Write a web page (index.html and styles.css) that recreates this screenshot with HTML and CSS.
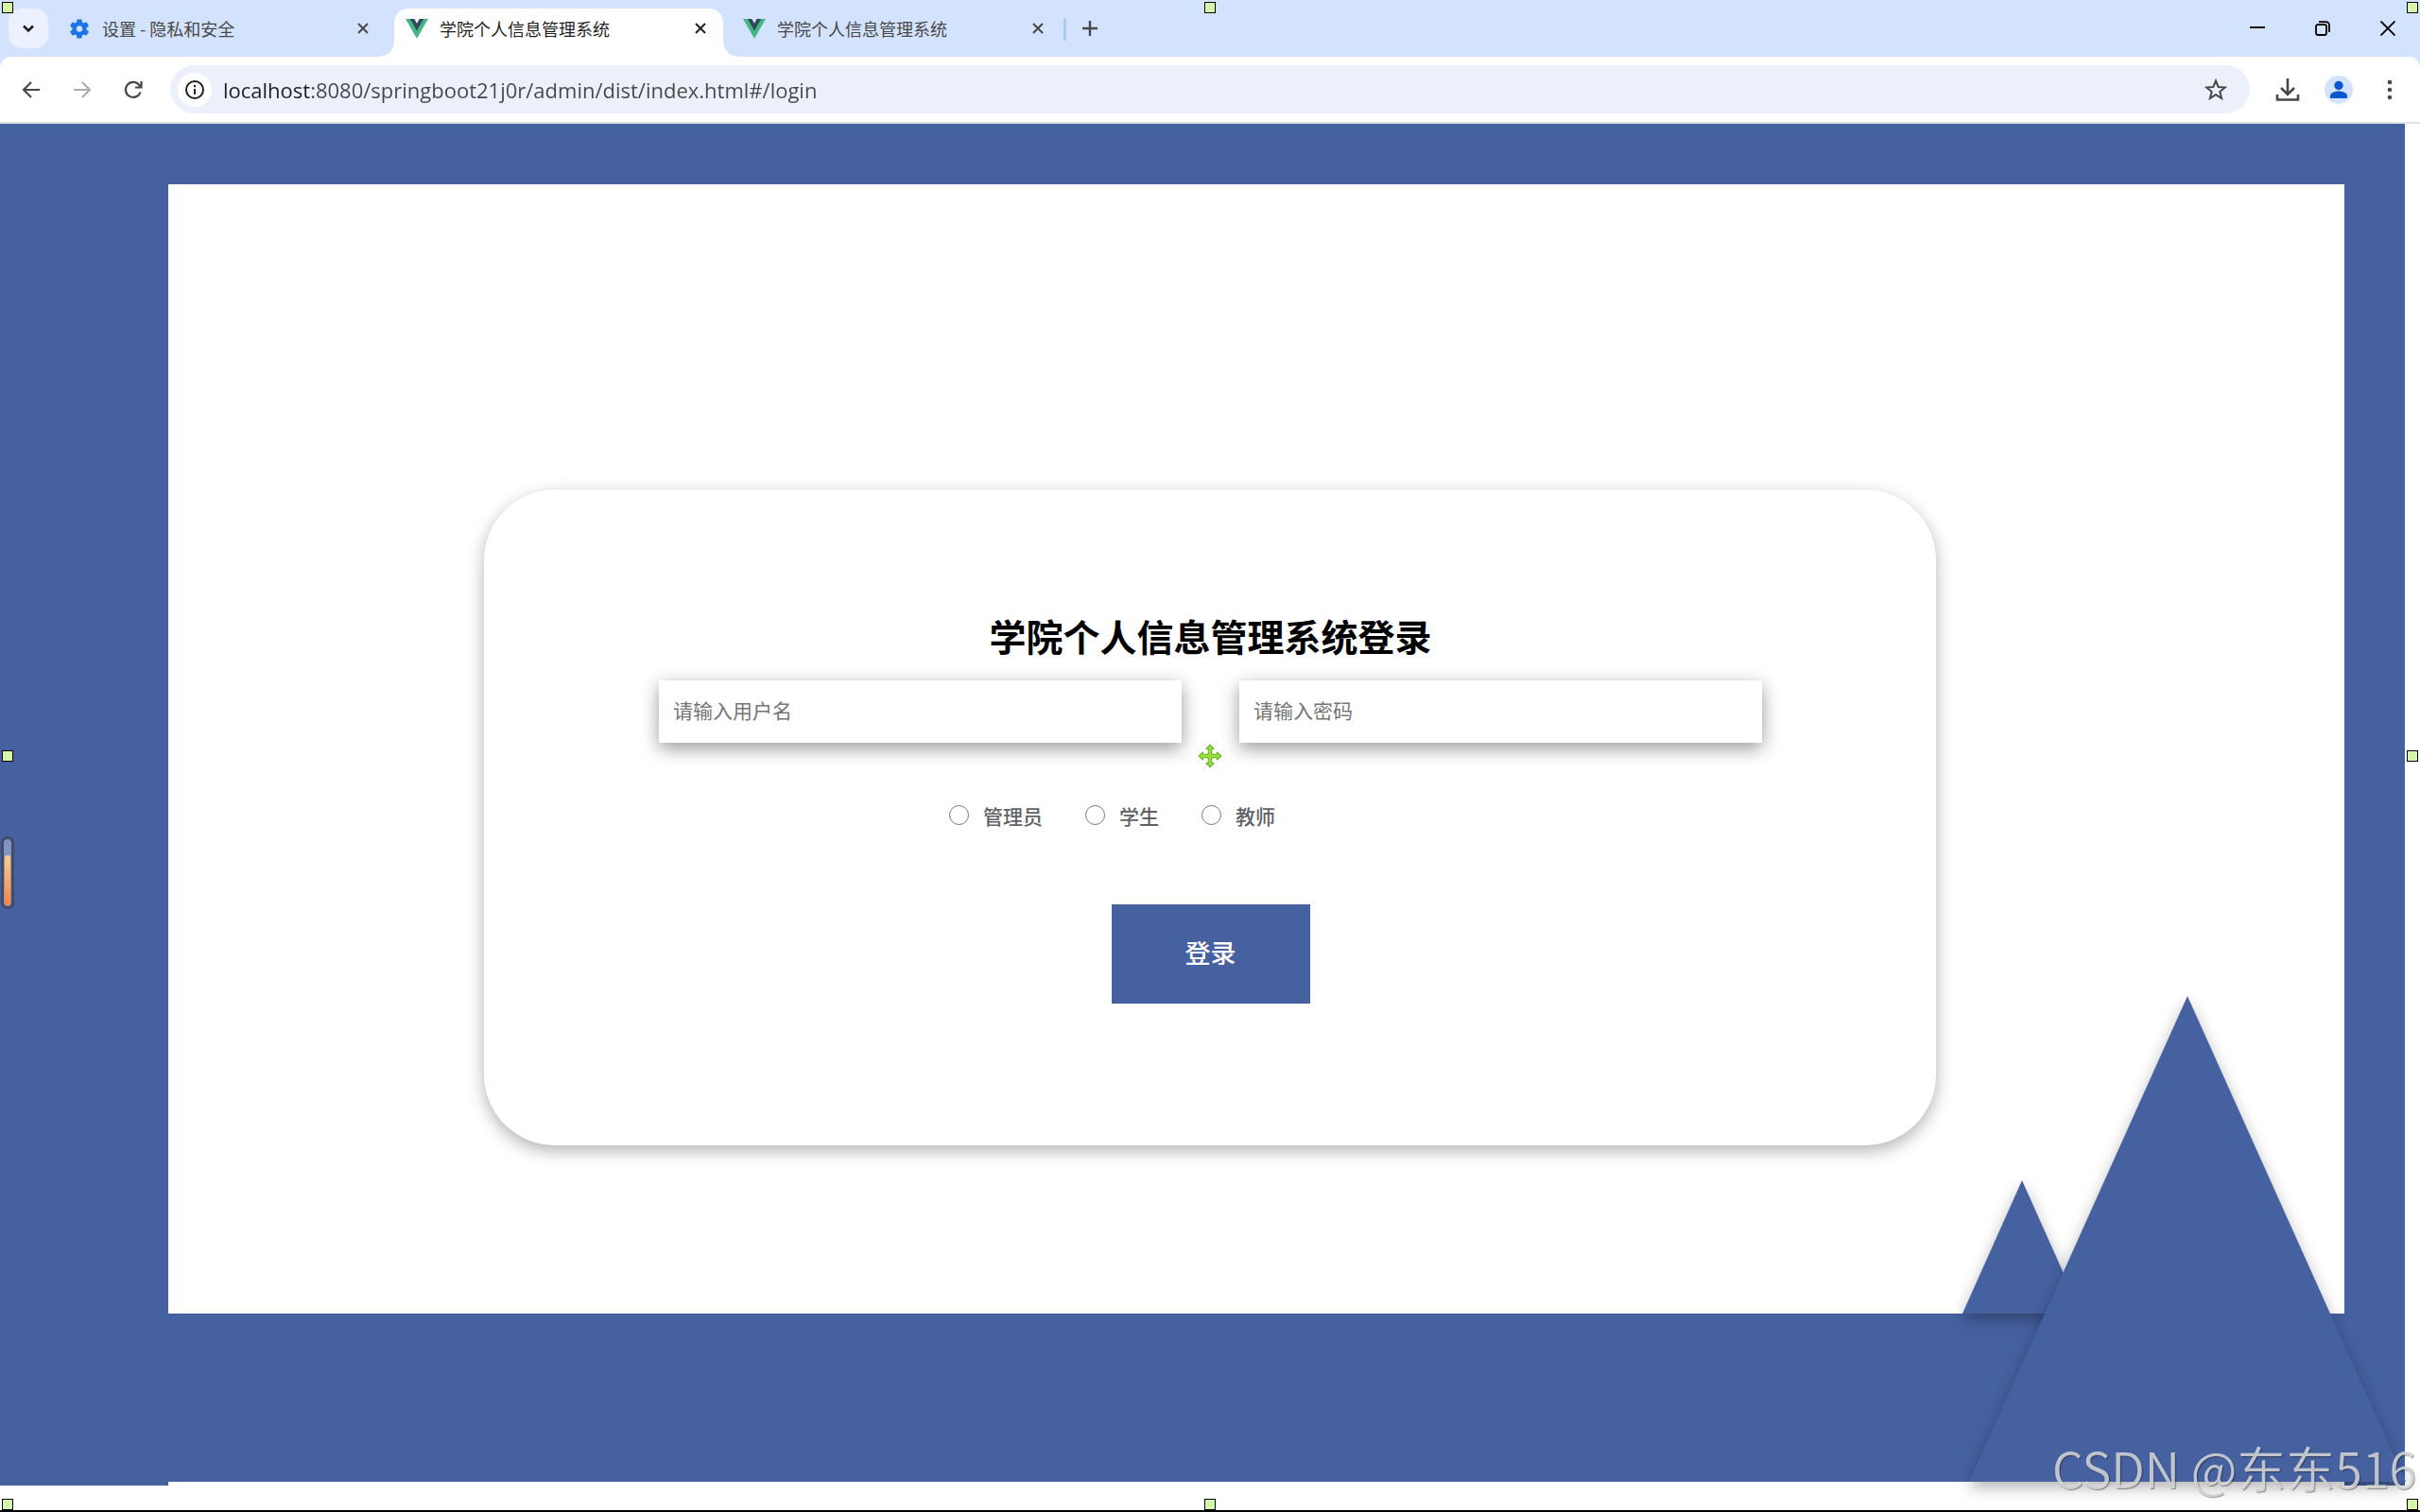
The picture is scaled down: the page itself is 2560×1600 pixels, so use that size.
FILE: index.html
```html
<!DOCTYPE html>
<html lang="zh-CN">
<head>
  <meta charset="UTF-8" />
  <title>学院个人信息管理系统</title>
  <link rel="stylesheet" href="styles.css">
</head>

<body>
  <svg class="defs" width="0" height="0">
    <symbol id="vue" viewBox="0 0 262 227">
      <path fill="#41b883" d="M161.096.001l-30.225 52.351L100.647.001H0l130.871 226.69L261.743.001z"/>
      <path fill="#34495e" d="M161.096.001l-30.225 52.351L100.647.001H52.346l78.525 136.01L209.398.001z"/>
    </symbol>
    <symbol id="cross" viewBox="0 0 12 12">
      <path d="M1 1l10 10M11 1L1 11" fill="none" stroke="currentColor" stroke-width="2"/>
    </symbol>
  </svg>

  <header class="browser">
    <div class="tab-strip">
      <button class="tab-search" aria-label="搜索标签页">
        <svg width="14" height="9" viewBox="0 0 14 9"><path d="M2 1.500l5 5 5-5" fill="none" stroke="#1f1f1f" stroke-width="2.600"/></svg>
      </button>
      <nav class="tabs">
        <div class="tab">
          <svg class="tab-icon" viewBox="2 2 20 20"><path fill="#1a73e8" d="M19.140 12.940c.040-.300.060-.610.060-.940s-.020-.640-.070-.940l2.030-1.580c.180-.140.230-.410.120-.610l-1.920-3.320c-.120-.220-.370-.290-.590-.220l-2.390.960c-.500-.380-1.030-.700-1.620-.940l-.360-2.540c-.040-.240-.240-.410-.480-.410h-3.840c-.240 0-.430.170-.470.410l-.360 2.540c-.590.240-1.130.570-1.620.940l-2.390-.960c-.220-.080-.470 0-.590.220L2.740 8.870c-.120.210-.080.470.120.610l2.030 1.580c-.050.300-.090.630-.090.940s.020.640.070.940l-2.030 1.580c-.180.140-.230.410-.120.610l1.920 3.320c.120.220.370.290.590.220l2.390-.960c.500.380 1.030.700 1.620.940l.360 2.540c.050.240.240.410.480.410h3.840c.240 0 .440-.170.470-.410l.360-2.540c.590-.240 1.130-.560 1.620-.940l2.390.960c.220.080.470 0 .590-.220l1.920-3.320c.120-.220.070-.470-.120-.610l-2.010-1.580zM12 15.200c-1.760 0-3.200-1.440-3.200-3.200s1.440-3.200 3.200-3.200 3.200 1.440 3.200 3.200-1.440 3.200-3.200 3.200z"/></svg>
          <span class="tab-title">设置 - 隐私和安全</span>
          <button class="tab-close" aria-label="关闭"><svg width="12" height="12"><use href="#cross"/></svg></button>
        </div>
        <div class="tab active">
          <svg class="tab-icon"><use href="#vue"/></svg>
          <span class="tab-title">学院个人信息管理系统</span>
          <button class="tab-close" aria-label="关闭"><svg width="12" height="12"><use href="#cross"/></svg></button>
        </div>
        <div class="tab">
          <svg class="tab-icon"><use href="#vue"/></svg>
          <span class="tab-title">学院个人信息管理系统</span>
          <button class="tab-close" aria-label="关闭"><svg width="12" height="12"><use href="#cross"/></svg></button>
        </div>
      </nav>
      <span class="tab-divider"></span>
      <button class="new-tab" aria-label="新标签页">
        <svg width="16" height="16" viewBox="0 0 16 16"><path d="M8 0v16M0 8h16" stroke="#474747" stroke-width="2.400"/></svg>
      </button>
      <div class="window-buttons">
        <button aria-label="最小化"><svg width="16" height="16" viewBox="0 0 16 16"><path d="M0 7h16" stroke="#000" stroke-width="2"/></svg></button>
        <button aria-label="还原"><svg width="16" height="16" viewBox="0 0 16 16" fill="none" stroke="#000" stroke-width="1.800"><rect x="1" y="4" width="11" height="11" rx="2"/><path d="M4 1.200h7.500a3.500 3.500 0 0 1 3.500 3.500V12"/></svg></button>
        <button aria-label="关闭窗口"><svg width="16" height="16" viewBox="0 0 16 16"><path d="M.5.5l15 15M15.500.5l-15 15" stroke="#000" stroke-width="1.800"/></svg></button>
      </div>
    </div>

    <div class="toolbar">
      <div class="nav-buttons">
        <button aria-label="后退"><svg width="20" height="20" viewBox="0 0 20 20" fill="none" stroke="#474747" stroke-width="2.200"><path d="M19 10H2M10 2l-8 8 8 8"/></svg></button>
        <button aria-label="前进"><svg width="20" height="20" viewBox="0 0 20 20" fill="none" stroke="#adadad" stroke-width="2.200"><path d="M1 10h17M10 2l8 8-8 8"/></svg></button>
        <button aria-label="刷新"><svg width="20" height="20" viewBox="0 0 20 20" fill="none" stroke="#474747" stroke-width="2.200"><path d="M17.500 12.500A8 8 0 1 1 16 4.700l2 2M18.500 1v6.500H12"/></svg></button>
      </div>
      <div class="address">
        <button class="site-info" aria-label="查看网站信息"><svg width="20" height="20" viewBox="0 0 20 20"><circle cx="10" cy="10" r="9" fill="none" stroke="#1f1f1f" stroke-width="2"/><path d="M10 9v6M10 5v2.200" stroke="#1f1f1f" stroke-width="2"/></svg></button>
        <input class="url" type="text" aria-label="地址" value="localhost:8080/springboot21j0r/admin/dist/index.html#/login">
        <button aria-label="收藏"><svg width="24" height="24" viewBox="0 0 24 24"><path d="M12 2.500l2.700 6.600 7.100.5-5.500 4.500 1.800 6.900L12 17.200 5.900 21l1.800-6.900L2.200 9.600l7.100-.5z" fill="none" stroke="#474747" stroke-width="2"/></svg></button>
      </div>
      <div class="tools">
        <button aria-label="下载"><svg width="26" height="26" viewBox="0 0 26 26" fill="none" stroke="#474747" stroke-width="2.600"><path d="M13 1v16M6 11l7 7 7-7M2 18v5.500h22V18"/></svg></button>
        <button aria-label="用户"><svg width="30" height="30" viewBox="0 0 30 30"><circle cx="15" cy="15" r="15" fill="#d3e3fd"/><circle cx="15" cy="10.500" r="4.700" fill="#0b57d0"/><path d="M6 24v-2.500c0-3.500 5-5 9-5s9 1.500 9 5V24z" fill="#0b57d0"/></svg></button>
        <button aria-label="菜单"><svg width="6" height="22" viewBox="0 0 6 22" fill="#474747"><circle cx="3" cy="3" r="2.300"/><circle cx="3" cy="11" r="2.300"/><circle cx="3" cy="19" r="2.300"/></svg></button>
      </div>
    </div>
  </header>

  <main class="login-page">
    <div class="frame">
      <div class="frame-inner"></div>
    </div>
    <svg class="mountain small" viewBox="0 0 126 141"><path d="M63 0l63 141H0z"/></svg>
    <svg class="mountain large" viewBox="0 0 462 514"><path d="M231 0l231 514H0z"/></svg>

    <form class="login-card">
      <h1>学院个人信息管理系统登录</h1>
      <div class="fields">
        <input type="text" aria-label="用户名" placeholder="请输入用户名">
        <input type="password" aria-label="密码" placeholder="请输入密码">
      </div>
      <div class="roles">
        <label><input type="radio" name="role">管理员</label>
        <label><input type="radio" name="role">学生</label>
        <label><input type="radio" name="role">教师</label>
      </div>
      <button class="login-btn" type="button">登录</button>
    </form>
  </main>

  <!-- capture selection drawn over the window -->
  <i class="handle top left"></i>
  <i class="handle top center"></i>
  <i class="handle top right"></i>
  <i class="handle middle left"></i>
  <i class="handle middle right"></i>
  <i class="handle bottom left"></i>
  <i class="handle bottom center"></i>
  <i class="handle bottom right"></i>
  <svg class="move" width="26" height="26" viewBox="0 0 26 26"><path d="M13 .8l4.200 4.700h-2.400v5.700h5.700V8.800l4.700 4.200-4.700 4.200v-2.400h-5.700v5.700h2.400L13 25.200l-4.200-4.700h2.400v-5.700H5.500v2.400L.8 13l4.700-4.200v2.400h5.700V5.500H8.800z" fill="#96de3c" stroke="#63ad1c" stroke-width="1"/></svg>
  <div class="gauge"><span></span></div>
  <div class="watermark">CSDN @东东516</div>
</body>
</html>
```
FILE: styles.css
```css
* {
  box-sizing: border-box;
}
body {
  margin: 0;
  min-height: 100vh;
  display: flex;
  flex-direction: column;
  position: relative;
  overflow: hidden;
  background: #fff;
  border-bottom: 2px solid #000;
  font-family: "Noto Sans CJK SC", sans-serif;
}
.defs {
  position: absolute;
}
button {
  display: flex;
  align-items: center;
  justify-content: center;
  padding: 0;
  border: none;
  background: none;
  font-family: inherit;
  cursor: pointer;
}
input {
  font-family: inherit;
}

/* browser bar */
.browser {
  background: #d3e3fd;
  border-bottom: 2px solid #e0e1e1;
}
.tab-strip {
  display: flex;
  height: 60px;
  padding: 9px 26px 0 9px;
}
.tab-search {
  width: 42px;
  height: 42px;
  border-radius: 14px;
  background: #ebf1fe;
}
.tabs {
  display: flex;
  gap: 9px;
  margin-left: 9px;
}
.tab {
  display: flex;
  align-items: center;
  width: 348px;
  padding: 0 18px 9px 12px;
  color: #474747;
  position: relative;
}
.tab.active {
  background: #fff;
  border-radius: 15px 15px 0 0;
  color: #1f1f1f;
}
.tab.active::before,
.tab.active::after {
  content: "";
  position: absolute;
  bottom: 0;
  width: 15px;
  height: 15px;
}
.tab.active::before {
  right: 100%;
  background: radial-gradient(circle at 0 0, transparent 14px, #fff 15px);
}
.tab.active::after {
  left: 100%;
  background: radial-gradient(circle at 100% 0, transparent 14px, #fff 15px);
}
.tab-icon {
  width: 24px;
  height: 21px;
}
.tab-title {
  flex: 1;
  margin-left: 12px;
  font-size: 18px;
  line-height: 24px;
}
.tab-close {
  color: inherit;
}
.tab-divider {
  width: 3px;
  height: 24px;
  margin: 10px 0 0 3px;
  border-radius: 2px;
  background: #a8c7fa;
}
.new-tab {
  height: 42px;
  margin-left: 17px;
}
.window-buttons {
  display: flex;
  gap: 53px;
  height: 42px;
  margin-left: auto;
}
.toolbar {
  display: flex;
  align-items: center;
  height: 69px;
  background: #fff;
  border-radius: 12px 12px 0 0;
}
.nav-buttons {
  display: flex;
  gap: 34px;
  padding: 0 29px 0 23px;
}
.address {
  flex: 1;
  display: flex;
  align-items: center;
  height: 51px;
  padding: 0 24px 0 8px;
  border-radius: 26px;
  background: #ebf0fa;
}
.site-info {
  width: 36px;
  height: 36px;
  border-radius: 50%;
  background: #fff;
}
.url {
  flex: 1;
  margin-left: 12px;
  padding: 0;
  border: none;
  outline: none;
  font: 22px "Open Sans", sans-serif;
  color: transparent;
  background: linear-gradient(to right, #1f1f1f 94px, #474747 94px);
  -webkit-background-clip: text;
  background-clip: text;
}
.tools {
  display: flex;
  align-items: center;
  padding: 0 29px 0 27px;
}
.tools button + button {
  margin-left: 26px;
}
.tools button:last-child {
  margin-left: 36px;
}

/* login page */
.login-page {
  flex: 1;
  display: grid;
  position: relative;
}
.frame {
  grid-area: 1 / 1;
  display: flex;
  margin: 0 16px 26px 0;
  border: solid #4661a0;
  border-width: 0 64px 0 178px;
}
.frame-inner {
  flex: 1;
  margin-bottom: 4px;
  border: solid #4661a0;
  border-width: 64px 0 178px;
}
.mountain {
  position: absolute;
  fill: #4661a0;
  filter: drop-shadow(0 6px 8px rgba(0, 0, 0, 0.3));
}
.mountain.small {
  right: 358px;
  bottom: 208px;
  width: 126px;
}
.mountain.large {
  right: 15px;
  bottom: 30px;
  width: 462px;
}
.login-card {
  grid-area: 1 / 1;
  place-self: center;
  position: relative;
  display: flex;
  flex-direction: column;
  align-items: center;
  width: 60%;
  padding: 124px 184px 150px 185px;
  border-radius: 75px;
  background: #fff;
  box-shadow: 0 6px 18px rgba(0, 0, 0, 0.3);
}
.login-card h1 {
  margin: 0;
  font-size: 39px;
  line-height: 60px;
  color: #000;
}
.fields {
  display: flex;
  gap: 61px;
  width: 100%;
  margin-top: 18px;
}
.fields input {
  flex: 1;
  min-width: 0;
  height: 66px;
  padding: 0 15px 3px;
  border: none;
  font-size: 21px;
  background: #fff;
  box-shadow: 0 6px 18px rgba(0, 0, 0, 0.4);
}
.fields input::placeholder {
  color: #757575;
}
.roles {
  display: flex;
  align-self: flex-start;
  gap: 45px;
  margin: 62px 0 0 307px;
}
.roles label {
  display: flex;
  align-items: center;
  font-size: 21px;
  line-height: 30px;
  font-weight: 500;
  color: #606266;
}
.roles input {
  width: 21px;
  height: 21px;
  margin: 0 15px 0 0;
}
.login-btn {
  width: 210px;
  height: 105px;
  margin-top: 79px;
  padding-bottom: 3px;
  background: #4661a0;
  color: #fff;
  font-size: 27px;
  font-weight: 500;
}

/* overlay */
.handle {
  position: absolute;
  width: 12px;
  height: 12px;
  border: 1px solid #000;
  background: #d4f7a8;
}
.top {
  top: 2px;
}
.middle {
  top: calc(50% - 5px);
}
.bottom {
  bottom: 0;
}
.left {
  left: 2px;
}
.center {
  left: calc(50% - 6px);
}
.right {
  right: 2px;
}
.move {
  position: absolute;
  top: calc(50% - 12px);
  left: calc(50% - 13px);
}
.gauge {
  position: absolute;
  top: 885px;
  left: 1px;
  display: flex;
  align-items: flex-end;
  width: 14px;
  height: 77px;
  padding: 1px;
  border: 3px solid #434c66;
  border-radius: 7px;
  background: #8295c0;
}
.gauge span {
  flex: 1;
  height: 53px;
  border-radius: 3px;
  background: linear-gradient(#ffcb8c, #ff8138);
}
.watermark {
  position: absolute;
  right: 4px;
  bottom: 7px;
  font-size: 52px;
  line-height: 76px;
  font-weight: 350;
  color: rgba(225, 225, 225, 0.82);
  text-shadow: 1px 1px 1px rgba(0, 0, 0, 0.4);
}
```
